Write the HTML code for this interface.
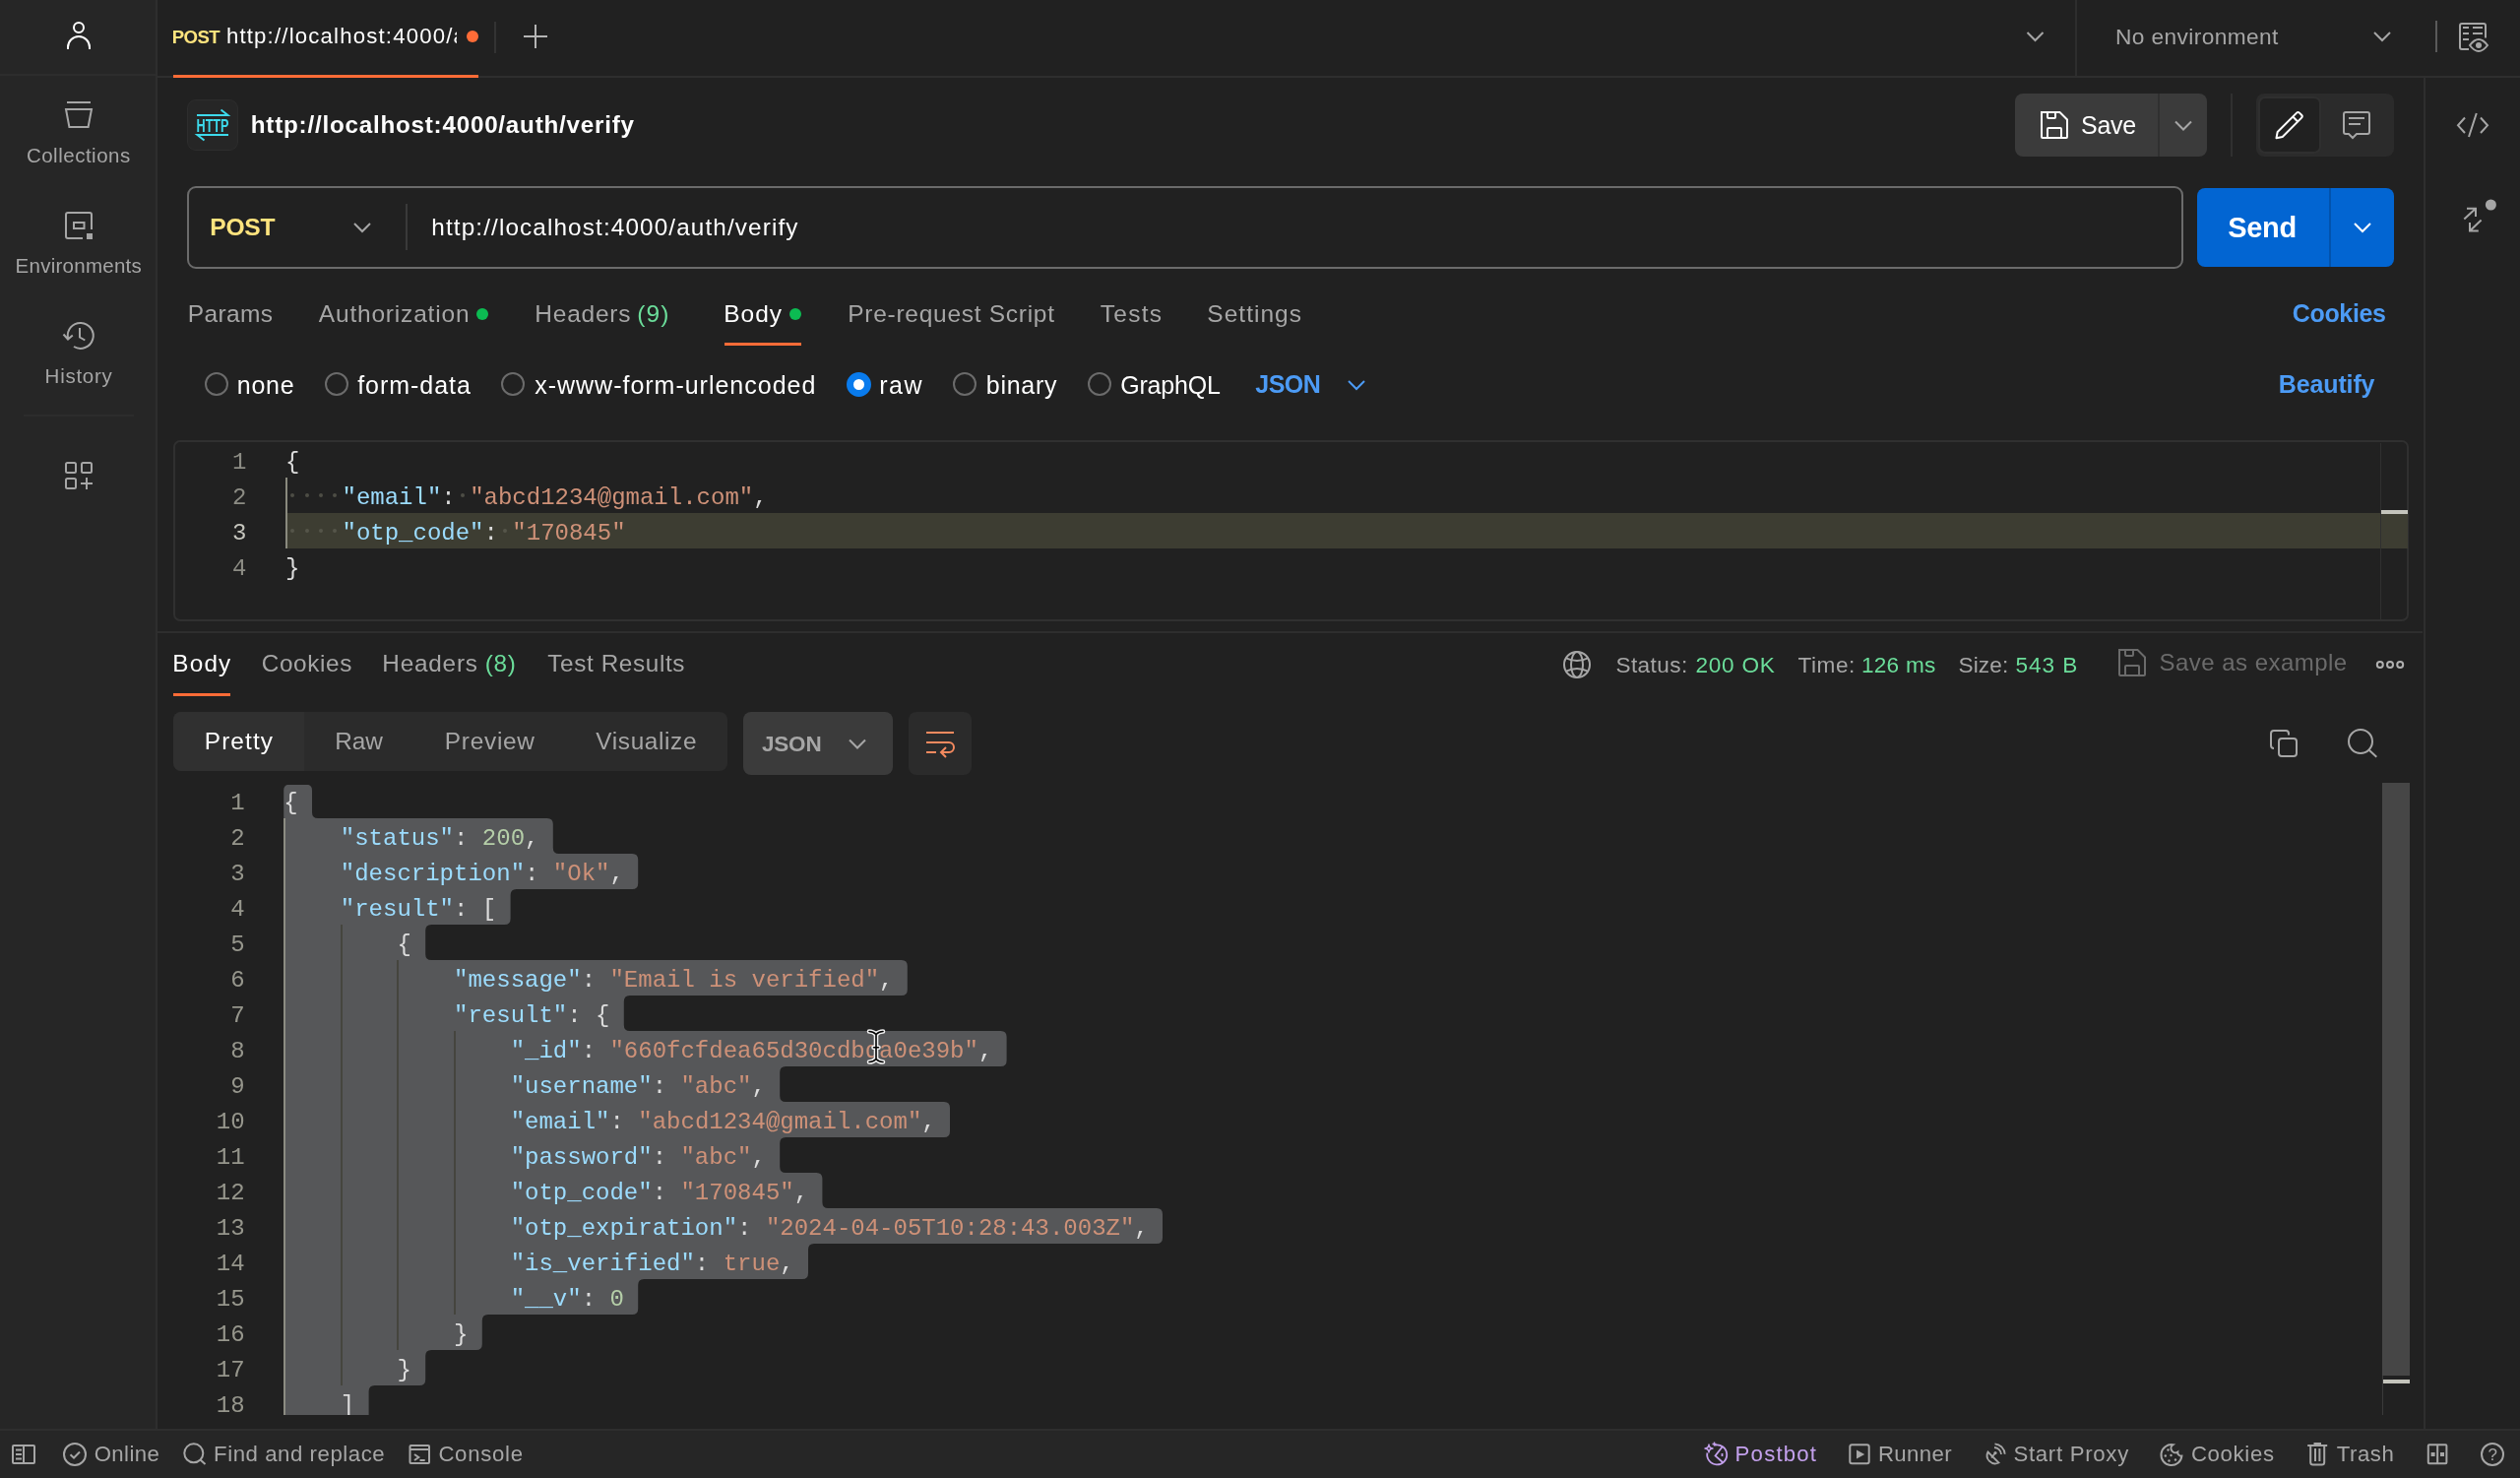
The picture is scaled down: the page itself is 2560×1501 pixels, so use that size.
<!DOCTYPE html>
<html lang="en">
<head>
<meta charset="utf-8">
<title>Postman</title>
<style>
html,body{margin:0;padding:0}
body{width:2560px;height:1501px;overflow:hidden;position:relative;background:#212121;font-family:"Liberation Sans",sans-serif;color:#fff}
div,span,svg{box-sizing:border-box}
.a{position:absolute}
.t{position:absolute;white-space:pre;line-height:40px;height:40px}
.ln,.cl{position:absolute;font-family:"Liberation Mono",monospace;font-size:24px;line-height:36px;height:36px;white-space:pre}
.ln{text-align:right}
.cl{color:#dcdcdc}
.k{color:#9cdcfe}.s{color:#ce9178}.n{color:#b5cea8}.p{color:#dcdcdc}
.guide{position:absolute;background:#4b4b48}
.dot{position:absolute;width:4px;height:4px;border-radius:50%;background:#4d4d45}
#sidebar{left:0;top:0;width:160px;height:1452px;background:#262626;border-right:2px solid #2e2e2e}
#sbhead{left:0;top:75px;width:158px;height:2px;background:#2d2d2d}
#sbsep{left:24px;top:421px;width:112px;height:2px;background:#2c2c2c}
#tabbar{left:160px;top:0;width:2400px;height:79px;border-bottom:2px solid #2e2e2e}
#tabul{left:176px;top:76px;width:310px;height:3px;background:#ff6c37}
#tabdiv{left:502px;top:22px;width:2px;height:32px;background:#333}
#envdiv{left:2108px;top:0;width:2px;height:77px;background:#2e2e2e}
#envdiv2{left:2474px;top:21px;width:2px;height:32px;background:#5a5a5a}
#rsb{left:2462px;top:79px;width:2px;height:1373px;background:#2e2e2e}
#status{left:0;top:1451px;width:2560px;height:50px;background:#262626;border-top:2px solid #2e2e2e}
#httpbox{left:190px;top:101px;width:52px;height:52px;border-radius:9px;background:#262626;border:1px solid #2d2d2d}
#savebtn{left:2047px;top:95px;width:195px;height:64px;border-radius:8px;background:#3b3b3b}
#savediv{left:2192px;top:95px;width:2px;height:64px;background:#303030}
#tdiv{left:2266px;top:95px;width:2px;height:64px;background:#303030}
#modegrp{left:2292px;top:95px;width:140px;height:64px;border-radius:8px;background:#2b2b2b}
#modeact{left:2294px;top:98px;width:64px;height:58px;border-radius:7px;background:#212121;border:2px solid #2f2f2f}
#urlbox{left:190px;top:189px;width:2028px;height:84px;border-radius:9px;border:2px solid #6b6b6b;background:#212121}
#urldiv{left:412px;top:207px;width:2px;height:47px;background:#3a3a3a}
#sendbtn{left:2232px;top:191px;width:200px;height:80px;border-radius:8px;background:#0265d2}
#senddiv{left:2366px;top:191px;width:2px;height:80px;background:#0253ad}
#bodyul{left:736px;top:348px;width:78px;height:3px;background:#ff6c37}
.gdot{position:absolute;width:12px;height:12px;border-radius:50%;background:#0cbb52}
.radio{position:absolute;width:24px;height:24px;border-radius:50%;border:2px solid #6b6b6b}
#radiosel{position:absolute;left:860px;top:378px;width:25px;height:25px;border-radius:50%;background:#fff;border:7px solid #097bed}
#reqed{position:absolute;left:176px;top:447px;width:2271px;height:184px;border:2px solid #303030;border-radius:7px}
#curline{position:absolute;background:#3d3d32}
#resborder{left:160px;top:641px;width:2301px;height:2px;background:#2e2e2e}
#resul{left:176px;top:704px;width:58px;height:3px;background:#ff6c37}
#viewgrp{left:176px;top:723px;width:563px;height:60px;border-radius:8px;background:#2b2b2b}
#viewact{left:176px;top:723px;width:133px;height:60px;border-radius:8px 0 0 8px;background:#303030}
#jsonbox{left:755px;top:723px;width:152px;height:64px;border-radius:8px;background:#3b3b3b}
#wrapbox{left:923px;top:723px;width:64px;height:64px;border-radius:8px;background:#2b2b2b}
svg.i{position:absolute;overflow:visible}
#layer{position:absolute;left:0;top:0;width:2560px;height:1501px;transform:translateZ(0);will-change:transform}
</style>
</head>
<body>
<div id="layer">
<div class="a" id="sidebar"></div>
<div class="a" id="sbhead"></div>
<div class="a" id="sbsep"></div>
<div class="a" id="tabbar"></div>
<div class="a" id="tabul"></div>
<div class="a" id="tabdiv"></div>
<div class="a" id="envdiv"></div>
<div class="a" id="envdiv2"></div>
<div class="a" id="rsb"></div>
<div class="a" id="httpbox"></div>
<div class="a" id="savebtn"></div>
<div class="a" id="savediv"></div>
<div class="a" id="tdiv"></div>
<div class="a" id="modegrp"></div>
<div class="a" id="modeact"></div>
<div class="a" id="urlbox"></div>
<div class="a" id="urldiv"></div>
<div class="a" id="sendbtn"></div>
<div class="a" id="senddiv"></div>
<div class="a" id="bodyul"></div>
<div class="gdot" style="left:484px;top:313px"></div>
<div class="gdot" style="left:802px;top:313px"></div>
<div class="a" style="left:474px;top:31px;width:12px;height:12px;border-radius:50%;background:#ff6c37"></div>
<div class="radio" style="left:208px;top:378px"></div>
<div class="radio" style="left:330px;top:378px"></div>
<div class="radio" style="left:509px;top:378px"></div>
<div id="radiosel"></div>
<div class="radio" style="left:968px;top:378px"></div>
<div class="radio" style="left:1105px;top:378px"></div>
<div class="a" id="resborder"></div>
<div class="a" id="resul"></div>
<div class="a" id="viewgrp"></div>
<div class="a" id="viewact"></div>
<div class="a" id="jsonbox"></div>
<div class="a" id="wrapbox"></div>
<div id="reqed"></div>
<div id="curline" style="left:292px;top:521px;width:2154px;height:36px"></div>
<div class="guide" style="left:290px;top:485px;width:2px;height:72px;background:#8a8a7e"></div>
<span class="ln" style="left:150.5px;width:100px;top:451.7px;color:#8c8c84">1</span>
<span class="cl" style="left:289.9px;top:451.7px"><span class="p">{</span></span>
<span class="ln" style="left:150.5px;width:100px;top:487.7px;color:#8c8c84">2</span>
<span class="cl" style="left:289.9px;top:487.7px">    <span class="k">&quot;email&quot;</span><span class="p">:</span> <span class="s">&quot;abcd1234@gmail.com&quot;</span><span class="p">,</span></span>
<span class="ln" style="left:150.5px;width:100px;top:523.7px;color:#c6c6be">3</span>
<span class="cl" style="left:289.9px;top:523.7px">    <span class="k">&quot;otp_code&quot;</span><span class="p">:</span> <span class="s">&quot;170845&quot;</span><span class="p"></span></span>
<span class="ln" style="left:150.5px;width:100px;top:559.7px;color:#8c8c84">4</span>
<span class="cl" style="left:289.9px;top:559.7px"><span class="p">}</span></span>
<div class="dot" style="left:295.1px;top:501.2px;background:#4d4d45"></div>
<div class="dot" style="left:309.5px;top:501.2px;background:#4d4d45"></div>
<div class="dot" style="left:323.9px;top:501.2px;background:#4d4d45"></div>
<div class="dot" style="left:338.3px;top:501.2px;background:#4d4d45"></div>
<div class="dot" style="left:467.9px;top:501.2px;background:#4d4d45"></div>
<div class="dot" style="left:295.1px;top:537.2px;background:#55554a"></div>
<div class="dot" style="left:309.5px;top:537.2px;background:#55554a"></div>
<div class="dot" style="left:323.9px;top:537.2px;background:#55554a"></div>
<div class="dot" style="left:338.3px;top:537.2px;background:#55554a"></div>
<div class="dot" style="left:511.1px;top:537.2px;background:#55554a"></div>
<div style="position:absolute;left:2418px;top:450px;width:1px;height:179px;background:#303030"></div>
<div style="position:absolute;left:2419px;top:518px;width:27px;height:4px;background:#c4c4bc"></div>
<div id="resed" style="position:absolute;left:160px;top:797px;width:2260px;height:640px;overflow:hidden">
<div style="position:absolute;left:0;top:-1.7000000000000455px;width:2260px;height:700px">
<svg style="position:absolute;left:0;top:0" width="2260" height="700" viewBox="160 795.3 2260 700"><path d="M288.2,803.0 Q288.2,797.0 294.2,797.0 L311.0,797.0 Q317.0,797.0 317.0,803.0 L317.0,825.3 Q317.0,831.3 323.0,831.3 L555.8,831.3 Q561.8,831.3 561.8,837.3 L561.8,861.3 Q561.8,867.3 567.8,867.3 L642.2,867.3 Q648.2,867.3 648.2,873.3 L648.2,897.3 Q648.2,903.3 642.2,903.3 L524.6,903.3 Q518.6,903.3 518.6,909.3 L518.6,933.3 Q518.6,939.3 512.6,939.3 L438.2,939.3 Q432.2,939.3 432.2,945.3 L432.2,969.3 Q432.2,975.3 438.2,975.3 L915.8,975.3 Q921.8,975.3 921.8,981.3 L921.8,1005.3 Q921.8,1011.3 915.8,1011.3 L639.8,1011.3 Q633.8,1011.3 633.8,1017.3 L633.8,1041.3 Q633.8,1047.3 639.8,1047.3 L1016.6,1047.3 Q1022.6,1047.3 1022.6,1053.3 L1022.6,1077.3 Q1022.6,1083.3 1016.6,1083.3 L798.2,1083.3 Q792.2,1083.3 792.2,1089.3 L792.2,1113.3 Q792.2,1119.3 798.2,1119.3 L959.0,1119.3 Q965.0,1119.3 965.0,1125.3 L965.0,1149.3 Q965.0,1155.3 959.0,1155.3 L798.2,1155.3 Q792.2,1155.3 792.2,1161.3 L792.2,1185.3 Q792.2,1191.3 798.2,1191.3 L829.4,1191.3 Q835.4,1191.3 835.4,1197.3 L835.4,1221.3 Q835.4,1227.3 841.4,1227.3 L1175.0,1227.3 Q1181.0,1227.3 1181.0,1233.3 L1181.0,1257.3 Q1181.0,1263.3 1175.0,1263.3 L827.0,1263.3 Q821.0,1263.3 821.0,1269.3 L821.0,1293.3 Q821.0,1299.3 815.0,1299.3 L654.2,1299.3 Q648.2,1299.3 648.2,1305.3 L648.2,1329.3 Q648.2,1335.3 642.2,1335.3 L495.8,1335.3 Q489.8,1335.3 489.8,1341.3 L489.8,1365.3 Q489.8,1371.3 483.8,1371.3 L438.2,1371.3 Q432.2,1371.3 432.2,1377.3 L432.2,1401.3 Q432.2,1407.3 426.2,1407.3 L380.6,1407.3 Q374.6,1407.3 374.6,1413.3 L374.6,1443.3 L288.2,1443.3 Z" fill="#565759"/></svg>
<div class="guide" style="left:185.8px;top:144px;width:2px;height:468px;background:#45453e"></div>
<div class="guide" style="left:243.4px;top:180px;width:2px;height:396px;background:#45453e"></div>
<div class="guide" style="left:301.0px;top:252px;width:2px;height:288px;background:#45453e"></div>
<div class="guide" style="left:127.8px;top:36px;width:2px;height:612px;background:#8c8c82"></div>
<span class="ln" style="left:-11.4px;width:100px;top:2.7px;color:#96968c">1</span>
<span class="cl" style="left:128.2px;top:2.7px"><span class="p">{</span></span>
<span class="ln" style="left:-11.4px;width:100px;top:38.7px;color:#96968c">2</span>
<span class="cl" style="left:128.2px;top:38.7px">    <span class="k">&quot;status&quot;</span><span class="p">:</span> <span class="n">200</span><span class="p">,</span></span>
<span class="ln" style="left:-11.4px;width:100px;top:74.7px;color:#96968c">3</span>
<span class="cl" style="left:128.2px;top:74.7px">    <span class="k">&quot;description&quot;</span><span class="p">:</span> <span class="s">&quot;Ok&quot;</span><span class="p">,</span></span>
<span class="ln" style="left:-11.4px;width:100px;top:110.7px;color:#96968c">4</span>
<span class="cl" style="left:128.2px;top:110.7px">    <span class="k">&quot;result&quot;</span><span class="p">:</span> <span class="p">[</span></span>
<span class="ln" style="left:-11.4px;width:100px;top:146.7px;color:#96968c">5</span>
<span class="cl" style="left:128.2px;top:146.7px">        <span class="p">{</span></span>
<span class="ln" style="left:-11.4px;width:100px;top:182.7px;color:#96968c">6</span>
<span class="cl" style="left:128.2px;top:182.7px">            <span class="k">&quot;message&quot;</span><span class="p">:</span> <span class="s">&quot;Email is verified&quot;</span><span class="p">,</span></span>
<span class="ln" style="left:-11.4px;width:100px;top:218.7px;color:#96968c">7</span>
<span class="cl" style="left:128.2px;top:218.7px">            <span class="k">&quot;result&quot;</span><span class="p">:</span> <span class="p">{</span></span>
<span class="ln" style="left:-11.4px;width:100px;top:254.7px;color:#96968c">8</span>
<span class="cl" style="left:128.2px;top:254.7px">                <span class="k">&quot;_id&quot;</span><span class="p">:</span> <span class="s">&quot;660fcfdea65d30cdbda0e39b&quot;</span><span class="p">,</span></span>
<span class="ln" style="left:-11.4px;width:100px;top:290.7px;color:#96968c">9</span>
<span class="cl" style="left:128.2px;top:290.7px">                <span class="k">&quot;username&quot;</span><span class="p">:</span> <span class="s">&quot;abc&quot;</span><span class="p">,</span></span>
<span class="ln" style="left:-11.4px;width:100px;top:326.7px;color:#96968c">10</span>
<span class="cl" style="left:128.2px;top:326.7px">                <span class="k">&quot;email&quot;</span><span class="p">:</span> <span class="s">&quot;abcd1234@gmail.com&quot;</span><span class="p">,</span></span>
<span class="ln" style="left:-11.4px;width:100px;top:362.7px;color:#96968c">11</span>
<span class="cl" style="left:128.2px;top:362.7px">                <span class="k">&quot;password&quot;</span><span class="p">:</span> <span class="s">&quot;abc&quot;</span><span class="p">,</span></span>
<span class="ln" style="left:-11.4px;width:100px;top:398.7px;color:#96968c">12</span>
<span class="cl" style="left:128.2px;top:398.7px">                <span class="k">&quot;otp_code&quot;</span><span class="p">:</span> <span class="s">&quot;170845&quot;</span><span class="p">,</span></span>
<span class="ln" style="left:-11.4px;width:100px;top:434.7px;color:#96968c">13</span>
<span class="cl" style="left:128.2px;top:434.7px">                <span class="k">&quot;otp_expiration&quot;</span><span class="p">:</span> <span class="s">&quot;2024-04-05T10:28:43.003Z&quot;</span><span class="p">,</span></span>
<span class="ln" style="left:-11.4px;width:100px;top:470.7px;color:#96968c">14</span>
<span class="cl" style="left:128.2px;top:470.7px">                <span class="k">&quot;is_verified&quot;</span><span class="p">:</span> <span class="s">true</span><span class="p">,</span></span>
<span class="ln" style="left:-11.4px;width:100px;top:506.7px;color:#96968c">15</span>
<span class="cl" style="left:128.2px;top:506.7px">                <span class="k">&quot;__v&quot;</span><span class="p">:</span> <span class="n">0</span><span class="p"></span></span>
<span class="ln" style="left:-11.4px;width:100px;top:542.7px;color:#96968c">16</span>
<span class="cl" style="left:128.2px;top:542.7px">            <span class="p">}</span></span>
<span class="ln" style="left:-11.4px;width:100px;top:578.7px;color:#96968c">17</span>
<span class="cl" style="left:128.2px;top:578.7px">        <span class="p">}</span></span>
<span class="ln" style="left:-11.4px;width:100px;top:614.7px;color:#96968c">18</span>
<span class="cl" style="left:128.2px;top:614.7px">    <span class="p">]</span></span>
</div></div>
<div style="position:absolute;left:2420px;top:795px;width:28px;height:602px;background:#464646"></div>
<div style="position:absolute;left:2420px;top:1397px;width:1px;height:40px;background:#3a3a3a"></div>
<div style="position:absolute;left:2421px;top:1401px;width:27px;height:4px;background:#c4c4bc"></div>
<div class="a" id="status"></div>
<span class="t"  style="left:26.9px;top:137.7px;font-size:20.5px;font-weight:400;color:#a6a6a6;letter-spacing:0.51px">Collections</span>
<span class="t"  style="left:15.6px;top:249.7px;font-size:20.5px;font-weight:400;color:#a6a6a6;letter-spacing:0.26px">Environments</span>
<span class="t"  style="left:45.6px;top:361.7px;font-size:20.5px;font-weight:400;color:#a6a6a6;letter-spacing:0.74px">History</span>
<span class="t"  style="left:174.7px;top:17.8px;font-size:18.6px;font-weight:700;color:#ffe47e;letter-spacing:-0.53px">POST</span>
<span class="t" id="tabtitle" style="left:229.9px;top:17.3px;font-size:22.2px;font-weight:400;color:#ffffff;letter-spacing:1.18px;width:234.1px;overflow:hidden">http://localhost:4000/auth/verify</span>
<span class="t"  style="left:2148.9px;top:17.3px;font-size:22.7px;font-weight:400;color:#a6a6a6;letter-spacing:0.41px">No environment</span>
<span class="t"  style="left:254.8px;top:106.6px;font-size:24.2px;font-weight:700;color:#ffffff;letter-spacing:0.78px">http://localhost:4000/auth/verify</span>
<span class="t"  style="left:2114.1px;top:106.7px;font-size:25px;font-weight:400;color:#ffffff;letter-spacing:-0.34px">Save</span>
<span class="t"  style="left:213.3px;top:211.4px;font-size:24.6px;font-weight:700;color:#ffe47e;letter-spacing:-0.25px">POST</span>
<span class="t"  style="left:438.3px;top:210.7px;font-size:24.3px;font-weight:400;color:#ffffff;letter-spacing:1.12px">http://localhost:4000/auth/verify</span>
<span class="t"  style="left:2263.3px;top:211.1px;font-size:29px;font-weight:700;color:#ffffff;letter-spacing:-0.34px">Send</span>
<span class="t"  style="left:190.8px;top:298.5px;font-size:24.5px;font-weight:400;color:#a6a6a6;letter-spacing:0.35px">Params</span>
<span class="t"  style="left:323.8px;top:298.5px;font-size:24.5px;font-weight:400;color:#a6a6a6;letter-spacing:0.81px">Authorization</span>
<span class="t"  style="left:543.3px;top:298.5px;font-size:24.5px;font-weight:400;color:#a6a6a6;letter-spacing:0.76px">Headers</span>
<span class="t"  style="left:647.3px;top:298.5px;font-size:24.5px;font-weight:400;color:#6bdd9a;letter-spacing:1.12px">(9)</span>
<span class="t"  style="left:735.3px;top:298.5px;font-size:24.5px;font-weight:400;color:#ffffff;letter-spacing:0.95px">Body</span>
<span class="t"  style="left:861.3px;top:298.5px;font-size:24.5px;font-weight:400;color:#a6a6a6;letter-spacing:0.72px">Pre-request Script</span>
<span class="t"  style="left:1117.8px;top:298.5px;font-size:24.5px;font-weight:400;color:#a6a6a6;letter-spacing:1.25px">Tests</span>
<span class="t"  style="left:1226.3px;top:298.5px;font-size:24.5px;font-weight:400;color:#a6a6a6;letter-spacing:1.02px">Settings</span>
<span class="t"  style="left:2328.8px;top:298.4px;font-size:25px;font-weight:700;color:#4c9bf5;letter-spacing:-0.34px">Cookies</span>
<span class="t"  style="left:240.8px;top:370.6px;font-size:25px;font-weight:400;color:#ffffff;letter-spacing:0.71px">none</span>
<span class="t"  style="left:363.2px;top:370.6px;font-size:25px;font-weight:400;color:#ffffff;letter-spacing:0.97px">form-data</span>
<span class="t"  style="left:543.2px;top:370.6px;font-size:25px;font-weight:400;color:#ffffff;letter-spacing:0.99px">x-www-form-urlencoded</span>
<span class="t"  style="left:893.2px;top:370.6px;font-size:25px;font-weight:400;color:#ffffff;letter-spacing:1.48px">raw</span>
<span class="t"  style="left:1001.8px;top:370.6px;font-size:25px;font-weight:400;color:#ffffff;letter-spacing:0.73px">binary</span>
<span class="t"  style="left:1138.2px;top:370.6px;font-size:25px;font-weight:400;color:#ffffff;letter-spacing:-0.18px">GraphQL</span>
<span class="t"  style="left:1275.2px;top:370.3px;font-size:25px;font-weight:700;color:#4c9bf5;letter-spacing:-0.45px">JSON</span>
<span class="t"  style="left:2314.8px;top:370.2px;font-size:25px;font-weight:700;color:#4c9bf5;letter-spacing:-0.13px">Beautify</span>
<span class="t"  style="left:175.3px;top:654.4px;font-size:24.3px;font-weight:400;color:#ffffff;letter-spacing:1.19px">Body</span>
<span class="t"  style="left:265.8px;top:654.4px;font-size:24.3px;font-weight:400;color:#a6a6a6;letter-spacing:0.62px">Cookies</span>
<span class="t"  style="left:388.3px;top:654.4px;font-size:24.3px;font-weight:400;color:#a6a6a6;letter-spacing:0.80px">Headers</span>
<span class="t"  style="left:492.8px;top:654.4px;font-size:24.3px;font-weight:400;color:#6bdd9a;letter-spacing:0.73px">(8)</span>
<span class="t"  style="left:556.3px;top:654.4px;font-size:24.3px;font-weight:400;color:#a6a6a6;letter-spacing:0.62px">Test Results</span>
<span class="t"  style="left:1641.4px;top:655.5px;font-size:22.6px;font-weight:400;color:#a6a6a6;letter-spacing:0.44px">Status:</span>
<span class="t"  style="left:1722.4px;top:655.5px;font-size:22.6px;font-weight:400;color:#6bdd9a;letter-spacing:0.77px">200 OK</span>
<span class="t"  style="left:1826.4px;top:655.5px;font-size:22.6px;font-weight:400;color:#a6a6a6;letter-spacing:0.58px">Time:</span>
<span class="t"  style="left:1890.9px;top:655.5px;font-size:22.6px;font-weight:400;color:#6bdd9a;letter-spacing:0.28px">126 ms</span>
<span class="t"  style="left:1989.4px;top:655.5px;font-size:22.6px;font-weight:400;color:#a6a6a6;letter-spacing:0.19px">Size:</span>
<span class="t"  style="left:2047.4px;top:655.5px;font-size:22.6px;font-weight:400;color:#6bdd9a;letter-spacing:0.98px">543 B</span>
<span class="t"  style="left:2193.5px;top:652.6px;font-size:24px;font-weight:400;color:#6b6b6b;letter-spacing:0.47px">Save as example</span>
<span class="t"  style="left:207.8px;top:732.6px;font-size:24.4px;font-weight:400;color:#ffffff;letter-spacing:1.09px">Pretty</span>
<span class="t"  style="left:340.3px;top:732.6px;font-size:24.4px;font-weight:400;color:#a6a6a6;letter-spacing:-0.06px">Raw</span>
<span class="t"  style="left:451.8px;top:732.6px;font-size:24.4px;font-weight:400;color:#a6a6a6;letter-spacing:0.74px">Preview</span>
<span class="t"  style="left:605.3px;top:732.6px;font-size:24.4px;font-weight:400;color:#a6a6a6;letter-spacing:0.63px">Visualize</span>
<span class="t"  style="left:773.9px;top:735.5px;font-size:22.5px;font-weight:700;color:#a6a6a6;letter-spacing:-0.17px">JSON</span>
<span class="t"  style="left:95.7px;top:1457.1px;font-size:22.2px;font-weight:400;color:#a6a6a6;letter-spacing:0.40px">Online</span>
<span class="t"  style="left:217.1px;top:1457.1px;font-size:22.2px;font-weight:400;color:#a6a6a6;letter-spacing:0.55px">Find and replace</span>
<span class="t"  style="left:445.4px;top:1457.1px;font-size:22.2px;font-weight:400;color:#a6a6a6;letter-spacing:0.71px">Console</span>
<span class="t"  style="left:1762.6px;top:1457.1px;font-size:22.2px;font-weight:400;color:#c3a0ec;letter-spacing:1.20px">Postbot</span>
<span class="t"  style="left:1907.9px;top:1457.1px;font-size:22.2px;font-weight:400;color:#a6a6a6;letter-spacing:0.39px">Runner</span>
<span class="t"  style="left:2045.4px;top:1457.1px;font-size:22.2px;font-weight:400;color:#a6a6a6;letter-spacing:0.71px">Start Proxy</span>
<span class="t"  style="left:2225.9px;top:1457.1px;font-size:22.2px;font-weight:400;color:#a6a6a6;letter-spacing:0.66px">Cookies</span>
<span class="t"  style="left:2373.7px;top:1457.1px;font-size:22.2px;font-weight:400;color:#a6a6a6;letter-spacing:0.56px">Trash</span>
<svg class="i" style="left:0;top:0" width="2560" height="1501" viewBox="0 0 2560 1501" fill="none" stroke-width="2" stroke="#a6a6a6">
<!-- left sidebar: user -->
<g stroke="#ffffff"><circle cx="80" cy="28" r="5"/><path d="M69,50 V48 a11,11 0 0 1 22,0 V50"/></g>
<!-- collections -->
<path d="M68,104 H92 M67,111 H93 L89.6,129 H70.4 Z"/>
<!-- environments -->
<path d="M84,242 H69 a2,2 0 0 1 -2,-2 V218 a2,2 0 0 1 2,-2 H91 a2,2 0 0 1 2,2 V233"/>
<rect x="75" y="226" width="10.5" height="6"/>
<rect x="88" y="237" width="6" height="6" fill="#a6a6a6" stroke="none"/>
<!-- history -->
<path d="M69,343.5 A13,13 0 1 1 75,352 M64.5,339.5 L69,344.5 L73.8,340.5 M81,333 V342.5 L86.3,345.5"/>
<!-- grid plus -->
<rect x="67" y="470" width="10" height="10" rx="1.5"/><rect x="83" y="470" width="10" height="10" rx="1.5"/><rect x="67" y="486" width="10" height="10" rx="1.5"/>
<path d="M88,485 V497 M82,491 H94"/>
<!-- new tab plus -->
<path d="M544,25 V49 M532,37 H556" stroke="#b4b4b4"/>
<!-- chevrons -->
<path d="M2059.5,33 L2067.5,41 L2075.5,33"/>
<path d="M2412,33 L2420,41 L2428,33"/>
<path d="M2210,123.5 L2218,131.5 L2226,123.5"/>
<path d="M360,227 L368,235 L376,227"/>
<path d="M2392,227 L2400,235 L2408,227" stroke="#ffffff"/>
<path d="M1370,387 L1378,395 L1386,387" stroke="#4c9bf5"/>
<path d="M863,751.5 L871,759.5 L879,751.5"/>
<!-- env quick look -->
<path d="M2508,50 H2501 a2,2 0 0 1 -2,-2 V26 a2,2 0 0 1 2,-2 H2523 a2,2 0 0 1 2,2 V38.5 M2502,28 H2508 M2512,28 H2522 M2502,34 H2508 M2512,34 H2522 M2502,40 H2508"/>
<path d="M2509,46 Q2518,34 2527,46 Q2518,58 2509,46 Z"/>
<circle cx="2518" cy="46" r="3" fill="#a6a6a6" stroke="none"/>
<!-- HTTP icon -->
<g stroke="#3dd9eb"><path d="M200,117 H231.5 L224.5,111.5 M232,137 H200.5 L207.5,142.5"/></g>
<text x="199.5" y="133.6" font-family="Liberation Sans, sans-serif" font-size="17.6" font-weight="700" fill="#3dd9eb" stroke="none" textLength="33" lengthAdjust="spacingAndGlyphs">HTTP</text>
<!-- save icon -->
<g stroke="#ffffff"><path d="M2074,114 H2092.5 L2100,121.5 V139 a1,1 0 0 1 -1,1 H2075 a1,1 0 0 1 -1,-1 Z M2080,114 V119 a1,1 0 0 0 1,1 H2087 a1,1 0 0 0 1,-1 V114 M2080,140 V131 a1,1 0 0 1 1,-1 H2093 a1,1 0 0 1 1,1 V140"/></g>
<!-- pencil -->
<g stroke="#ffffff" stroke-linejoin="round" stroke-linecap="round"><path d="M2313.65,134 L2333.1,114.6 Q2334.5,113.2 2335.9,114.6 L2338.1,116.8 Q2339.5,118.2 2338.1,119.6 L2318.7,139.05 L2312.5,140.3 Z M2329.2,118.5 L2334.2,123.5"/></g>
<!-- comment -->
<path d="M2383,114 H2405 a2,2 0 0 1 2,2 V134 a2,2 0 0 1 -2,2 H2394 L2390,140 L2386,136 H2383 a2,2 0 0 1 -2,-2 V116 a2,2 0 0 1 2,-2 Z M2386,120 H2402 M2386,126 H2398"/>
<!-- code -->
<path d="M2504,119.5 L2497,127.3 L2504,135 M2515.8,115 L2508,139 M2520,119.5 L2527,127.3 L2520,135"/>
<!-- expand -->
<path d="M2503.3,222.5 L2515,211.7 M2506,211.7 H2515 V220 M2520.6,223.4 L2509,234.4 M2509,226 V234.4 H2517.8"/>
<circle cx="2530.4" cy="208" r="5.5" fill="#a6a6a6" stroke="none"/>
<!-- globe -->
<circle cx="1602" cy="675" r="13"/><ellipse cx="1602" cy="675" rx="6" ry="13"/>
<path d="M1591,668.3 Q1602,673.5 1613,668.3 M1591,681.7 Q1602,676.5 1613,681.7"/>
<!-- save (disabled) -->
<g stroke="#6b6b6b" transform="translate(79,546)"><path d="M2074,114 H2092.5 L2100,121.5 V139 a1,1 0 0 1 -1,1 H2075 a1,1 0 0 1 -1,-1 Z M2080,114 V119 a1,1 0 0 0 1,1 H2087 a1,1 0 0 0 1,-1 V114 M2080,140 V131 a1,1 0 0 1 1,-1 H2093 a1,1 0 0 1 1,1 V140"/></g>
<!-- more ooo -->
<g stroke="#b0b0b0"><circle cx="2417.8" cy="675" r="3"/><circle cx="2428" cy="675" r="3"/><circle cx="2438.2" cy="675" r="3"/></g>
<!-- copy -->
<path d="M2325,746.5 V745 a3,3 0 0 0 -3,-3 H2310 a3,3 0 0 0 -3,3 V757 a3,3 0 0 0 3,3"/>
<rect x="2315" y="750" width="18" height="18" rx="3"/>
<!-- search -->
<circle cx="2398" cy="753" r="12"/><path d="M2406.7,761.7 L2414.3,768.7"/>
<!-- wrap -->
<g stroke="#f58a5f"><path d="M941,744 H969 M941,754 H964 a5,5 0 0 1 0,10 H956 M961,759 L956,764 L961,769 M941,764 H951"/></g>
<!-- status bar: sidebar toggle -->
<rect x="13" y="1468" width="22" height="18" rx="1"/><path d="M24,1468 V1486 M16,1472.5 H22 M16,1477 H22 M16,1481.5 H22"/>
<!-- online -->
<circle cx="76" cy="1477" r="11"/><path d="M71.5,1477.3 L75,1480.5 L81,1474.5"/>
<!-- find -->
<circle cx="196.8" cy="1475.8" r="9.5"/><path d="M203.5,1482.5 L208.5,1487"/>
<!-- console -->
<rect x="416.5" y="1468" width="19.5" height="18" rx="1"/><path d="M416.5,1472 H436 M421,1477 L425.3,1480 L421,1483 M426.5,1483 H431.7"/>
<!-- postbot -->
<g stroke="#c3a0ec" stroke-width="1.8"><path d="M1742,1467.6 A10,10 0 1 1 1734.4,1475.5 M1749.5,1469.5 L1742.5,1478.5 L1750.5,1485.5 M1749.5,1476 V1479"/>
<path d="M1736,1466.5 Q1736,1471 1740.5,1471 Q1736,1471 1736,1475.5 Q1736,1471 1731.5,1471 Q1736,1471 1736,1466.5 Z M1741.5,1464.5 V1468.5 M1739.5,1466.5 H1743.5" stroke-width="1.4"/></g>
<!-- runner -->
<rect x="1879.3" y="1467.3" width="19.4" height="19" rx="2"/><path d="M1886,1472.5 L1894.2,1477 L1886,1481.5 Z" fill="#a6a6a6" stroke="none"/>
<!-- proxy -->
<g stroke-width="1.8"><path d="M2019.5,1474.5 A8.2,8.2 0 0 0 2030.5,1485.5 Z M2023,1480.5 L2026.7,1476"/><circle cx="2027" cy="1475.6" r="1.6" fill="#a6a6a6" stroke="none"/>
<path d="M2026,1470 A7.5,7.5 0 0 1 2033,1477 M2026.5,1466.3 A11,11 0 0 1 2036.7,1476.7"/></g>
<!-- cookies -->
<path d="M2207.5,1467.2 A10.5,10.5 0 1 0 2216.4,1478.6 A3.6,3.6 0 0 1 2212.3,1474.6 A3.8,3.8 0 0 1 2207.5,1467.2 Z"/>
<g fill="#a6a6a6" stroke="none"><circle cx="2202.5" cy="1472.5" r="1.2"/><circle cx="2199.8" cy="1478.5" r="1.2"/><circle cx="2205.5" cy="1478" r="1.2"/><circle cx="2203.5" cy="1483.5" r="1.2"/><circle cx="2210" cy="1482.5" r="1.2"/></g>
<!-- trash -->
<path d="M2344.2,1468 H2364.2 M2350.5,1466 H2358 M2347.2,1468 V1485 a2.5,2.5 0 0 0 2.5,2.5 H2358.7 a2.5,2.5 0 0 0 2.5,-2.5 V1468 M2352,1471 V1484 M2356.4,1471 V1484"/>
<!-- two pane -->
<rect x="2466.8" y="1467.3" width="18.6" height="19" rx="1"/><path d="M2476.2,1467.3 V1486.3"/>
<g fill="#a6a6a6" stroke="none"><rect x="2469.6" y="1475" width="4" height="4"/><rect x="2479" y="1475" width="4" height="4"/></g>
<!-- help -->
<circle cx="2532" cy="1477" r="11"/>
<text x="2527.6" y="1483" font-family="Liberation Sans, sans-serif" font-size="17" fill="#a6a6a6" stroke="none">?</text>
<!-- mouse I-beam -->
<g stroke-linecap="round" stroke-linejoin="round"><path d="M883,1047.5 Q887,1047.5 890,1050.5 Q893,1047.5 897,1047.5 M890,1050.5 V1075.5 M883,1078.5 Q887,1078.5 890,1075.5 Q893,1078.5 897,1078.5 M887.5,1063.7 H892.5" stroke="#f0f0f0" stroke-width="4.6"/>
<path d="M883,1047.5 Q887,1047.5 890,1050.5 Q893,1047.5 897,1047.5 M890,1050.5 V1075.5 M883,1078.5 Q887,1078.5 890,1075.5 Q893,1078.5 897,1078.5 M887.5,1063.7 H892.5" stroke="#000000" stroke-width="1.6"/></g>
</svg>

</div>
</body>
</html>
